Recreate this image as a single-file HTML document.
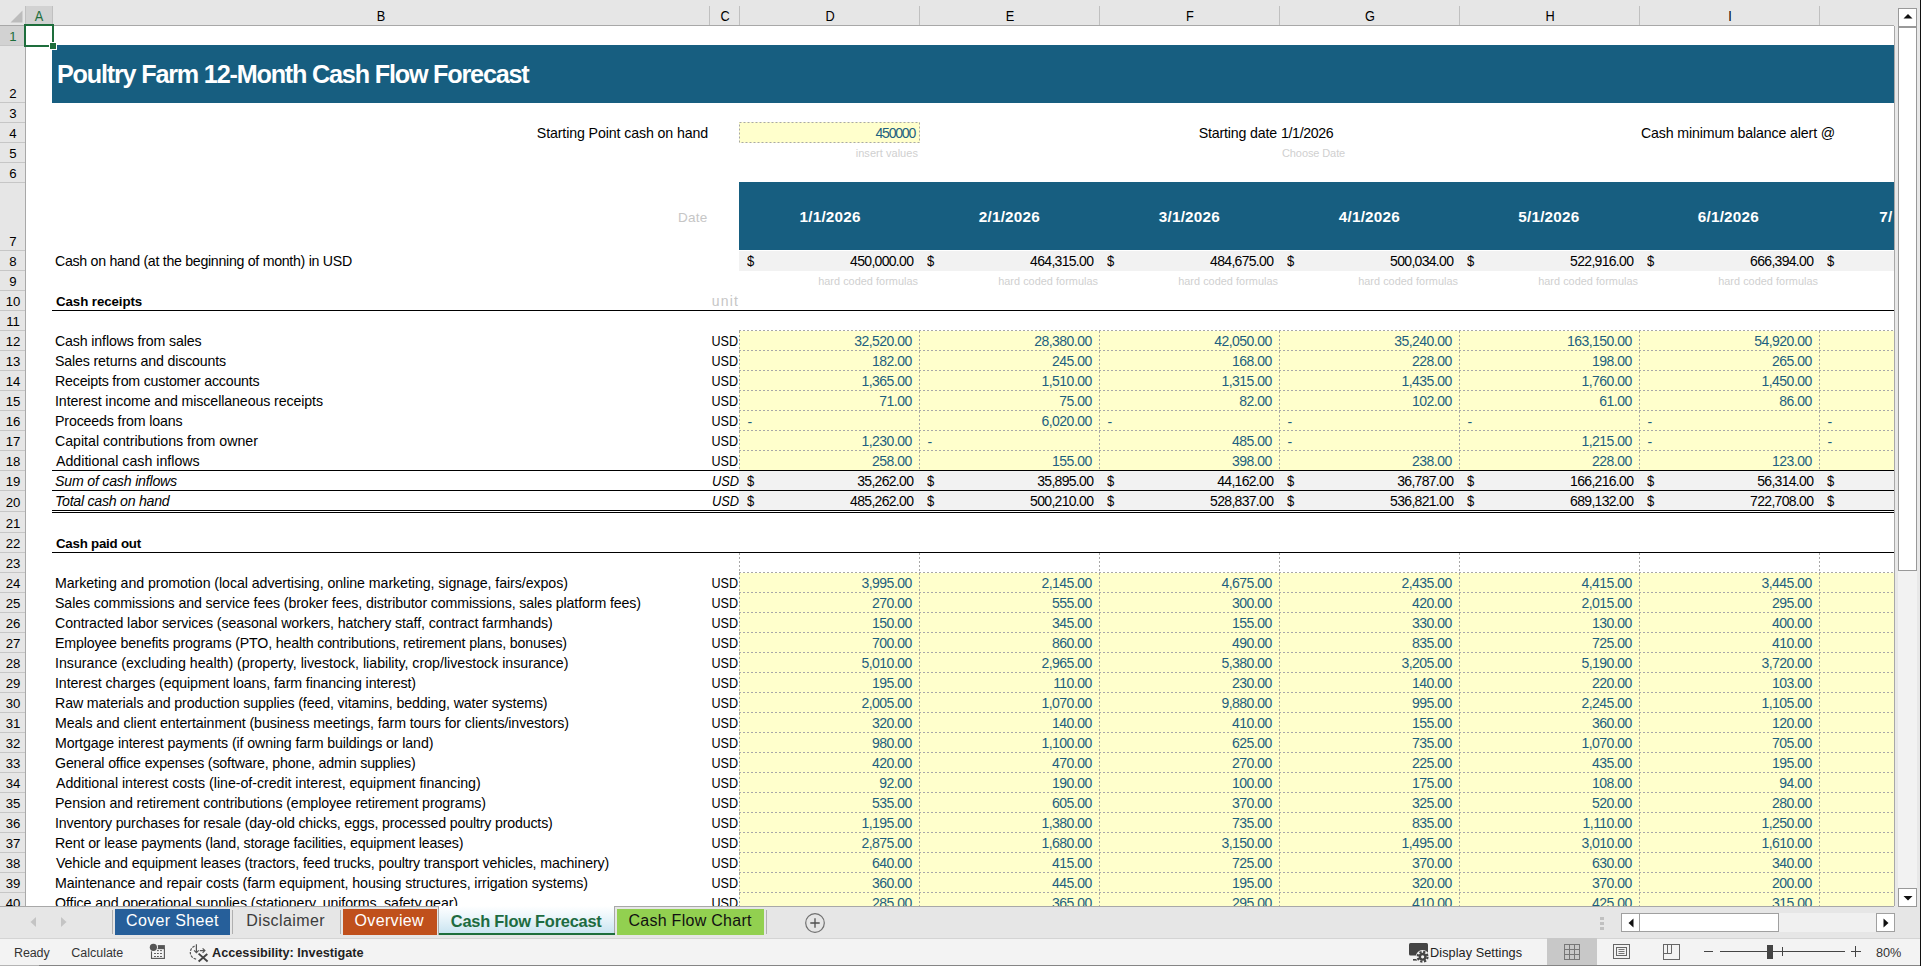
<!DOCTYPE html>
<html><head><meta charset="utf-8">
<style>
html,body{margin:0;padding:0;}
body{width:1921px;height:966px;overflow:hidden;position:relative;background:#fff;font-family:"Liberation Sans", sans-serif;}
body div{position:absolute;}
.t{white-space:nowrap;}
</style></head><body>
<div style="left:26px;top:26px;width:1868px;height:880px;background:#fff"></div>
<div style="left:52px;top:45px;width:1842px;height:58px;background:#175e80"></div>
<div class="t" style="top:61.67px;font-size:25.2px;line-height:25.2px;color:#fff;font-weight:bold;letter-spacing:-1.192px;left:57.00px;">Poultry Farm 12-Month Cash Flow Forecast</div>
<div class="t" style="top:125.98px;font-size:14.2px;line-height:14.2px;color:#000;letter-spacing:-0.115px;left:108.00px;width:600px;text-align:right;">Starting Point cash on hand</div>
<div style="left:739px;top:122px;width:181px;height:21px;background:#ffffcc"></div>
<svg style="position:absolute;left:739px;top:122px" width="181" height="21"><rect x="0.5" y="0.5" width="180" height="20" fill="none" stroke="#a8a8a8" stroke-width="1" stroke-dasharray="2 2"/></svg>
<div class="t" style="top:126.15px;font-size:14px;line-height:14px;color:#1d5f80;letter-spacing:-1.200px;left:315.00px;width:600px;text-align:right;">450000</div>
<div class="t" style="top:147.69px;font-size:11px;line-height:11px;color:#d0d0d0;letter-spacing:0.042px;left:318.00px;width:600px;text-align:right;">insert values</div>
<div class="t" style="top:125.98px;font-size:14.2px;line-height:14.2px;color:#000;letter-spacing:-0.167px;left:677.00px;width:600px;text-align:right;">Starting date</div>
<div class="t" style="top:125.98px;font-size:14.2px;line-height:14.2px;color:#000;letter-spacing:-0.357px;left:1281.00px;">1/1/2026</div>
<div class="t" style="top:147.69px;font-size:11px;line-height:11px;color:#d0d0d0;letter-spacing:-0.100px;left:1282.00px;">Choose Date</div>
<div class="t" style="top:125.98px;font-size:14.2px;line-height:14.2px;color:#000;letter-spacing:-0.148px;left:1641.00px;">Cash minimum balance alert @</div>
<div style="left:739px;top:182px;width:1155px;height:68px;background:#175e80"></div>
<div class="t" style="top:210.57px;font-size:13.5px;line-height:13.5px;color:#c6c6c6;letter-spacing:0.250px;left:107.50px;width:600px;text-align:right;">Date</div>
<div class="t" style="top:209.05px;font-size:15.3px;line-height:15.3px;color:#fff;font-weight:bold;letter-spacing:0.214px;left:799.50px;">1/1/2026</div>
<div class="t" style="top:209.05px;font-size:15.3px;line-height:15.3px;color:#fff;font-weight:bold;letter-spacing:0.214px;left:978.75px;">2/1/2026</div>
<div class="t" style="top:209.05px;font-size:15.3px;line-height:15.3px;color:#fff;font-weight:bold;letter-spacing:0.214px;left:1158.75px;">3/1/2026</div>
<div class="t" style="top:209.05px;font-size:15.3px;line-height:15.3px;color:#fff;font-weight:bold;letter-spacing:0.214px;left:1338.75px;">4/1/2026</div>
<div class="t" style="top:209.05px;font-size:15.3px;line-height:15.3px;color:#fff;font-weight:bold;letter-spacing:0.214px;left:1518.25px;">5/1/2026</div>
<div class="t" style="top:209.05px;font-size:15.3px;line-height:15.3px;color:#fff;font-weight:bold;letter-spacing:0.214px;left:1697.75px;">6/1/2026</div>
<div class="t" style="top:209.05px;font-size:15.3px;line-height:15.3px;color:#fff;font-weight:bold;letter-spacing:0.214px;left:1879.25px;">7/</div>
<div class="t" style="top:253.98px;font-size:14.2px;line-height:14.2px;color:#000;letter-spacing:-0.296px;left:55.00px;">Cash on hand (at the beginning of month) in USD</div>
<div style="left:739px;top:251px;width:1155px;height:20px;background:#f2f2f2"></div>
<div class="t" style="top:252.88px;font-size:15.5px;line-height:15.5px;color:#000;transform:scaleX(0.8438);transform-origin:left center;left:747.00px;">$</div>
<div class="t" style="top:254.15px;font-size:14px;line-height:14px;color:#000;letter-spacing:-0.694px;left:313.25px;width:600px;text-align:right;">450,000.00</div>
<div class="t" style="top:275.77px;font-size:10.9px;line-height:10.9px;color:#d0d0d0;letter-spacing:0.028px;left:318.00px;width:600px;text-align:right;">hard coded formulas</div>
<div class="t" style="top:252.88px;font-size:15.5px;line-height:15.5px;color:#000;transform:scaleX(0.8438);transform-origin:left center;left:927.00px;">$</div>
<div class="t" style="top:254.15px;font-size:14px;line-height:14px;color:#000;letter-spacing:-0.694px;left:493.25px;width:600px;text-align:right;">464,315.00</div>
<div class="t" style="top:275.77px;font-size:10.9px;line-height:10.9px;color:#d0d0d0;letter-spacing:0.028px;left:498.00px;width:600px;text-align:right;">hard coded formulas</div>
<div class="t" style="top:252.88px;font-size:15.5px;line-height:15.5px;color:#000;transform:scaleX(0.8438);transform-origin:left center;left:1107.00px;">$</div>
<div class="t" style="top:254.15px;font-size:14px;line-height:14px;color:#000;letter-spacing:-0.694px;left:673.25px;width:600px;text-align:right;">484,675.00</div>
<div class="t" style="top:275.77px;font-size:10.9px;line-height:10.9px;color:#d0d0d0;letter-spacing:0.028px;left:678.00px;width:600px;text-align:right;">hard coded formulas</div>
<div class="t" style="top:252.88px;font-size:15.5px;line-height:15.5px;color:#000;transform:scaleX(0.8438);transform-origin:left center;left:1287.00px;">$</div>
<div class="t" style="top:254.15px;font-size:14px;line-height:14px;color:#000;letter-spacing:-0.694px;left:853.25px;width:600px;text-align:right;">500,034.00</div>
<div class="t" style="top:275.77px;font-size:10.9px;line-height:10.9px;color:#d0d0d0;letter-spacing:0.028px;left:858.00px;width:600px;text-align:right;">hard coded formulas</div>
<div class="t" style="top:252.88px;font-size:15.5px;line-height:15.5px;color:#000;transform:scaleX(0.8438);transform-origin:left center;left:1467.00px;">$</div>
<div class="t" style="top:254.15px;font-size:14px;line-height:14px;color:#000;letter-spacing:-0.694px;left:1033.25px;width:600px;text-align:right;">522,916.00</div>
<div class="t" style="top:275.77px;font-size:10.9px;line-height:10.9px;color:#d0d0d0;letter-spacing:0.028px;left:1038.00px;width:600px;text-align:right;">hard coded formulas</div>
<div class="t" style="top:252.88px;font-size:15.5px;line-height:15.5px;color:#000;transform:scaleX(0.8438);transform-origin:left center;left:1647.00px;">$</div>
<div class="t" style="top:254.15px;font-size:14px;line-height:14px;color:#000;letter-spacing:-0.694px;left:1213.25px;width:600px;text-align:right;">666,394.00</div>
<div class="t" style="top:275.77px;font-size:10.9px;line-height:10.9px;color:#d0d0d0;letter-spacing:0.028px;left:1218.00px;width:600px;text-align:right;">hard coded formulas</div>
<div class="t" style="top:252.88px;font-size:15.5px;line-height:15.5px;color:#000;transform:scaleX(0.8438);transform-origin:left center;left:1827.00px;">$</div>
<div class="t" style="top:294.74px;font-size:13.3px;line-height:13.3px;color:#000;font-weight:bold;letter-spacing:-0.083px;left:56.00px;">Cash receipts</div>
<div class="t" style="top:294.15px;font-size:14px;line-height:14px;color:#c6c6c6;letter-spacing:1.167px;left:139.00px;width:600px;text-align:right;">unit</div>
<div style="left:52px;top:310px;width:1842px;height:1px;background:#000"></div>
<div style="left:739px;top:331px;width:1155px;height:140px;background:#ffffcc"></div>
<div style="left:739px;top:330px;width:1155px;height:1px;background-image:linear-gradient(90deg,#a8a8a8 50%,transparent 50%);background-size:4px 1px"></div>
<div style="left:739px;top:350px;width:1155px;height:1px;background-image:linear-gradient(90deg,#a8a8a8 50%,transparent 50%);background-size:4px 1px"></div>
<div style="left:739px;top:370px;width:1155px;height:1px;background-image:linear-gradient(90deg,#a8a8a8 50%,transparent 50%);background-size:4px 1px"></div>
<div style="left:739px;top:390px;width:1155px;height:1px;background-image:linear-gradient(90deg,#a8a8a8 50%,transparent 50%);background-size:4px 1px"></div>
<div style="left:739px;top:410px;width:1155px;height:1px;background-image:linear-gradient(90deg,#a8a8a8 50%,transparent 50%);background-size:4px 1px"></div>
<div style="left:739px;top:430px;width:1155px;height:1px;background-image:linear-gradient(90deg,#a8a8a8 50%,transparent 50%);background-size:4px 1px"></div>
<div style="left:739px;top:450px;width:1155px;height:1px;background-image:linear-gradient(90deg,#a8a8a8 50%,transparent 50%);background-size:4px 1px"></div>
<div style="left:739px;top:331px;width:1px;height:139px;background-image:linear-gradient(180deg,#a8a8a8 50%,transparent 50%);background-size:1px 4px"></div>
<div style="left:919px;top:331px;width:1px;height:139px;background-image:linear-gradient(180deg,#a8a8a8 50%,transparent 50%);background-size:1px 4px"></div>
<div style="left:1099px;top:331px;width:1px;height:139px;background-image:linear-gradient(180deg,#a8a8a8 50%,transparent 50%);background-size:1px 4px"></div>
<div style="left:1279px;top:331px;width:1px;height:139px;background-image:linear-gradient(180deg,#a8a8a8 50%,transparent 50%);background-size:1px 4px"></div>
<div style="left:1459px;top:331px;width:1px;height:139px;background-image:linear-gradient(180deg,#a8a8a8 50%,transparent 50%);background-size:1px 4px"></div>
<div style="left:1639px;top:331px;width:1px;height:139px;background-image:linear-gradient(180deg,#a8a8a8 50%,transparent 50%);background-size:1px 4px"></div>
<div style="left:1819px;top:331px;width:1px;height:139px;background-image:linear-gradient(180deg,#a8a8a8 50%,transparent 50%);background-size:1px 4px"></div>
<div class="t" style="top:333.98px;font-size:14.2px;line-height:14.2px;color:#000;letter-spacing:-0.145px;left:55.00px;">Cash inflows from sales</div>
<div class="t" style="top:333.90px;font-size:14.3px;line-height:14.3px;color:#000;transform:scaleX(0.8809);transform-origin:right center;left:138.00px;width:600px;text-align:right;">USD</div>
<div class="t" style="top:334.15px;font-size:14px;line-height:14px;color:#1d5f80;letter-spacing:-0.531px;left:311.75px;width:600px;text-align:right;">32,520.00</div>
<div class="t" style="top:334.15px;font-size:14px;line-height:14px;color:#1d5f80;letter-spacing:-0.531px;left:491.75px;width:600px;text-align:right;">28,380.00</div>
<div class="t" style="top:334.15px;font-size:14px;line-height:14px;color:#1d5f80;letter-spacing:-0.531px;left:671.75px;width:600px;text-align:right;">42,050.00</div>
<div class="t" style="top:334.15px;font-size:14px;line-height:14px;color:#1d5f80;letter-spacing:-0.531px;left:851.75px;width:600px;text-align:right;">35,240.00</div>
<div class="t" style="top:334.15px;font-size:14px;line-height:14px;color:#1d5f80;letter-spacing:-0.531px;left:1031.75px;width:600px;text-align:right;">163,150.00</div>
<div class="t" style="top:334.15px;font-size:14px;line-height:14px;color:#1d5f80;letter-spacing:-0.531px;left:1211.75px;width:600px;text-align:right;">54,920.00</div>
<div class="t" style="top:353.98px;font-size:14.2px;line-height:14.2px;color:#000;letter-spacing:-0.150px;left:55.00px;">Sales returns and discounts</div>
<div class="t" style="top:353.90px;font-size:14.3px;line-height:14.3px;color:#000;transform:scaleX(0.8809);transform-origin:right center;left:138.00px;width:600px;text-align:right;">USD</div>
<div class="t" style="top:354.15px;font-size:14px;line-height:14px;color:#1d5f80;letter-spacing:-0.531px;left:311.75px;width:600px;text-align:right;">182.00</div>
<div class="t" style="top:354.15px;font-size:14px;line-height:14px;color:#1d5f80;letter-spacing:-0.531px;left:491.75px;width:600px;text-align:right;">245.00</div>
<div class="t" style="top:354.15px;font-size:14px;line-height:14px;color:#1d5f80;letter-spacing:-0.531px;left:671.75px;width:600px;text-align:right;">168.00</div>
<div class="t" style="top:354.15px;font-size:14px;line-height:14px;color:#1d5f80;letter-spacing:-0.531px;left:851.75px;width:600px;text-align:right;">228.00</div>
<div class="t" style="top:354.15px;font-size:14px;line-height:14px;color:#1d5f80;letter-spacing:-0.531px;left:1031.75px;width:600px;text-align:right;">198.00</div>
<div class="t" style="top:354.15px;font-size:14px;line-height:14px;color:#1d5f80;letter-spacing:-0.531px;left:1211.75px;width:600px;text-align:right;">265.00</div>
<div class="t" style="top:373.98px;font-size:14.2px;line-height:14.2px;color:#000;letter-spacing:-0.197px;left:55.00px;">Receipts from customer accounts</div>
<div class="t" style="top:373.90px;font-size:14.3px;line-height:14.3px;color:#000;transform:scaleX(0.8809);transform-origin:right center;left:138.00px;width:600px;text-align:right;">USD</div>
<div class="t" style="top:374.15px;font-size:14px;line-height:14px;color:#1d5f80;letter-spacing:-0.531px;left:311.75px;width:600px;text-align:right;">1,365.00</div>
<div class="t" style="top:374.15px;font-size:14px;line-height:14px;color:#1d5f80;letter-spacing:-0.531px;left:491.75px;width:600px;text-align:right;">1,510.00</div>
<div class="t" style="top:374.15px;font-size:14px;line-height:14px;color:#1d5f80;letter-spacing:-0.531px;left:671.75px;width:600px;text-align:right;">1,315.00</div>
<div class="t" style="top:374.15px;font-size:14px;line-height:14px;color:#1d5f80;letter-spacing:-0.531px;left:851.75px;width:600px;text-align:right;">1,435.00</div>
<div class="t" style="top:374.15px;font-size:14px;line-height:14px;color:#1d5f80;letter-spacing:-0.531px;left:1031.75px;width:600px;text-align:right;">1,760.00</div>
<div class="t" style="top:374.15px;font-size:14px;line-height:14px;color:#1d5f80;letter-spacing:-0.531px;left:1211.75px;width:600px;text-align:right;">1,450.00</div>
<div class="t" style="top:393.98px;font-size:14.2px;line-height:14.2px;color:#000;letter-spacing:-0.098px;left:55.00px;">Interest income and miscellaneous receipts</div>
<div class="t" style="top:393.90px;font-size:14.3px;line-height:14.3px;color:#000;transform:scaleX(0.8809);transform-origin:right center;left:138.00px;width:600px;text-align:right;">USD</div>
<div class="t" style="top:394.15px;font-size:14px;line-height:14px;color:#1d5f80;letter-spacing:-0.531px;left:311.75px;width:600px;text-align:right;">71.00</div>
<div class="t" style="top:394.15px;font-size:14px;line-height:14px;color:#1d5f80;letter-spacing:-0.531px;left:491.75px;width:600px;text-align:right;">75.00</div>
<div class="t" style="top:394.15px;font-size:14px;line-height:14px;color:#1d5f80;letter-spacing:-0.531px;left:671.75px;width:600px;text-align:right;">82.00</div>
<div class="t" style="top:394.15px;font-size:14px;line-height:14px;color:#1d5f80;letter-spacing:-0.531px;left:851.75px;width:600px;text-align:right;">102.00</div>
<div class="t" style="top:394.15px;font-size:14px;line-height:14px;color:#1d5f80;letter-spacing:-0.531px;left:1031.75px;width:600px;text-align:right;">61.00</div>
<div class="t" style="top:394.15px;font-size:14px;line-height:14px;color:#1d5f80;letter-spacing:-0.531px;left:1211.75px;width:600px;text-align:right;">86.00</div>
<div class="t" style="top:413.98px;font-size:14.2px;line-height:14.2px;color:#000;letter-spacing:-0.144px;left:55.00px;">Proceeds from loans</div>
<div class="t" style="top:413.90px;font-size:14.3px;line-height:14.3px;color:#000;transform:scaleX(0.8809);transform-origin:right center;left:138.00px;width:600px;text-align:right;">USD</div>
<div class="t" style="top:415.15px;font-size:14px;line-height:14px;color:#1d5f80;left:747.50px;">-</div>
<div class="t" style="top:414.15px;font-size:14px;line-height:14px;color:#1d5f80;letter-spacing:-0.531px;left:491.75px;width:600px;text-align:right;">6,020.00</div>
<div class="t" style="top:415.15px;font-size:14px;line-height:14px;color:#1d5f80;left:1107.50px;">-</div>
<div class="t" style="top:415.15px;font-size:14px;line-height:14px;color:#1d5f80;left:1287.50px;">-</div>
<div class="t" style="top:415.15px;font-size:14px;line-height:14px;color:#1d5f80;left:1467.50px;">-</div>
<div class="t" style="top:415.15px;font-size:14px;line-height:14px;color:#1d5f80;left:1647.50px;">-</div>
<div class="t" style="top:415.15px;font-size:14px;line-height:14px;color:#1d5f80;left:1827.50px;">-</div>
<div class="t" style="top:433.98px;font-size:14.2px;line-height:14.2px;color:#000;letter-spacing:-0.019px;left:55.00px;">Capital contributions from owner</div>
<div class="t" style="top:433.90px;font-size:14.3px;line-height:14.3px;color:#000;transform:scaleX(0.8809);transform-origin:right center;left:138.00px;width:600px;text-align:right;">USD</div>
<div class="t" style="top:434.15px;font-size:14px;line-height:14px;color:#1d5f80;letter-spacing:-0.531px;left:311.75px;width:600px;text-align:right;">1,230.00</div>
<div class="t" style="top:435.15px;font-size:14px;line-height:14px;color:#1d5f80;left:927.50px;">-</div>
<div class="t" style="top:434.15px;font-size:14px;line-height:14px;color:#1d5f80;letter-spacing:-0.531px;left:671.75px;width:600px;text-align:right;">485.00</div>
<div class="t" style="top:435.15px;font-size:14px;line-height:14px;color:#1d5f80;left:1287.50px;">-</div>
<div class="t" style="top:434.15px;font-size:14px;line-height:14px;color:#1d5f80;letter-spacing:-0.531px;left:1031.75px;width:600px;text-align:right;">1,215.00</div>
<div class="t" style="top:435.15px;font-size:14px;line-height:14px;color:#1d5f80;left:1647.50px;">-</div>
<div class="t" style="top:435.15px;font-size:14px;line-height:14px;color:#1d5f80;left:1827.50px;">-</div>
<div class="t" style="top:453.98px;font-size:14.2px;line-height:14.2px;color:#000;letter-spacing:0.005px;left:56.00px;">Additional cash inflows</div>
<div class="t" style="top:453.90px;font-size:14.3px;line-height:14.3px;color:#000;transform:scaleX(0.8809);transform-origin:right center;left:138.00px;width:600px;text-align:right;">USD</div>
<div class="t" style="top:454.15px;font-size:14px;line-height:14px;color:#1d5f80;letter-spacing:-0.531px;left:311.75px;width:600px;text-align:right;">258.00</div>
<div class="t" style="top:454.15px;font-size:14px;line-height:14px;color:#1d5f80;letter-spacing:-0.531px;left:491.75px;width:600px;text-align:right;">155.00</div>
<div class="t" style="top:454.15px;font-size:14px;line-height:14px;color:#1d5f80;letter-spacing:-0.531px;left:671.75px;width:600px;text-align:right;">398.00</div>
<div class="t" style="top:454.15px;font-size:14px;line-height:14px;color:#1d5f80;letter-spacing:-0.531px;left:851.75px;width:600px;text-align:right;">238.00</div>
<div class="t" style="top:454.15px;font-size:14px;line-height:14px;color:#1d5f80;letter-spacing:-0.531px;left:1031.75px;width:600px;text-align:right;">228.00</div>
<div class="t" style="top:454.15px;font-size:14px;line-height:14px;color:#1d5f80;letter-spacing:-0.531px;left:1211.75px;width:600px;text-align:right;">123.00</div>
<div style="left:739px;top:471px;width:1155px;height:19px;background:#f2f2f2"></div>
<div style="left:739px;top:491px;width:1155px;height:19px;background:#f2f2f2"></div>
<div style="left:52px;top:470px;width:1842px;height:1px;background:#000"></div>
<div style="left:52px;top:490px;width:1842px;height:1px;background:#000"></div>
<div style="left:52px;top:510px;width:1842px;height:1px;background:#000"></div>
<div style="left:52px;top:512px;width:1842px;height:1px;background:#000"></div>
<div class="t" style="top:473.98px;font-size:14.2px;line-height:14.2px;color:#000;font-style:italic;letter-spacing:-0.222px;left:55.00px;">Sum of cash inflows</div>
<div class="t" style="top:493.98px;font-size:14.2px;line-height:14.2px;color:#000;font-style:italic;letter-spacing:-0.276px;left:55.00px;">Total cash on hand</div>
<div class="t" style="top:473.90px;font-size:14.3px;line-height:14.3px;color:#000;font-style:italic;transform:scaleX(0.8980);transform-origin:right center;left:138.50px;width:600px;text-align:right;">USD</div>
<div class="t" style="top:493.90px;font-size:14.3px;line-height:14.3px;color:#000;font-style:italic;transform:scaleX(0.8980);transform-origin:right center;left:138.50px;width:600px;text-align:right;">USD</div>
<div class="t" style="top:472.88px;font-size:15.5px;line-height:15.5px;color:#000;transform:scaleX(0.8438);transform-origin:left center;left:747.00px;">$</div>
<div class="t" style="top:492.88px;font-size:15.5px;line-height:15.5px;color:#000;transform:scaleX(0.8438);transform-origin:left center;left:747.00px;">$</div>
<div class="t" style="top:474.15px;font-size:14px;line-height:14px;color:#000;letter-spacing:-0.694px;left:313.25px;width:600px;text-align:right;">35,262.00</div>
<div class="t" style="top:494.15px;font-size:14px;line-height:14px;color:#000;letter-spacing:-0.694px;left:313.25px;width:600px;text-align:right;">485,262.00</div>
<div class="t" style="top:472.88px;font-size:15.5px;line-height:15.5px;color:#000;transform:scaleX(0.8438);transform-origin:left center;left:927.00px;">$</div>
<div class="t" style="top:492.88px;font-size:15.5px;line-height:15.5px;color:#000;transform:scaleX(0.8438);transform-origin:left center;left:927.00px;">$</div>
<div class="t" style="top:474.15px;font-size:14px;line-height:14px;color:#000;letter-spacing:-0.694px;left:493.25px;width:600px;text-align:right;">35,895.00</div>
<div class="t" style="top:494.15px;font-size:14px;line-height:14px;color:#000;letter-spacing:-0.694px;left:493.25px;width:600px;text-align:right;">500,210.00</div>
<div class="t" style="top:472.88px;font-size:15.5px;line-height:15.5px;color:#000;transform:scaleX(0.8438);transform-origin:left center;left:1107.00px;">$</div>
<div class="t" style="top:492.88px;font-size:15.5px;line-height:15.5px;color:#000;transform:scaleX(0.8438);transform-origin:left center;left:1107.00px;">$</div>
<div class="t" style="top:474.15px;font-size:14px;line-height:14px;color:#000;letter-spacing:-0.694px;left:673.25px;width:600px;text-align:right;">44,162.00</div>
<div class="t" style="top:494.15px;font-size:14px;line-height:14px;color:#000;letter-spacing:-0.694px;left:673.25px;width:600px;text-align:right;">528,837.00</div>
<div class="t" style="top:472.88px;font-size:15.5px;line-height:15.5px;color:#000;transform:scaleX(0.8438);transform-origin:left center;left:1287.00px;">$</div>
<div class="t" style="top:492.88px;font-size:15.5px;line-height:15.5px;color:#000;transform:scaleX(0.8438);transform-origin:left center;left:1287.00px;">$</div>
<div class="t" style="top:474.15px;font-size:14px;line-height:14px;color:#000;letter-spacing:-0.694px;left:853.25px;width:600px;text-align:right;">36,787.00</div>
<div class="t" style="top:494.15px;font-size:14px;line-height:14px;color:#000;letter-spacing:-0.694px;left:853.25px;width:600px;text-align:right;">536,821.00</div>
<div class="t" style="top:472.88px;font-size:15.5px;line-height:15.5px;color:#000;transform:scaleX(0.8438);transform-origin:left center;left:1467.00px;">$</div>
<div class="t" style="top:492.88px;font-size:15.5px;line-height:15.5px;color:#000;transform:scaleX(0.8438);transform-origin:left center;left:1467.00px;">$</div>
<div class="t" style="top:474.15px;font-size:14px;line-height:14px;color:#000;letter-spacing:-0.694px;left:1033.25px;width:600px;text-align:right;">166,216.00</div>
<div class="t" style="top:494.15px;font-size:14px;line-height:14px;color:#000;letter-spacing:-0.694px;left:1033.25px;width:600px;text-align:right;">689,132.00</div>
<div class="t" style="top:472.88px;font-size:15.5px;line-height:15.5px;color:#000;transform:scaleX(0.8438);transform-origin:left center;left:1647.00px;">$</div>
<div class="t" style="top:492.88px;font-size:15.5px;line-height:15.5px;color:#000;transform:scaleX(0.8438);transform-origin:left center;left:1647.00px;">$</div>
<div class="t" style="top:474.15px;font-size:14px;line-height:14px;color:#000;letter-spacing:-0.694px;left:1213.25px;width:600px;text-align:right;">56,314.00</div>
<div class="t" style="top:494.15px;font-size:14px;line-height:14px;color:#000;letter-spacing:-0.694px;left:1213.25px;width:600px;text-align:right;">722,708.00</div>
<div class="t" style="top:472.88px;font-size:15.5px;line-height:15.5px;color:#000;transform:scaleX(0.8438);transform-origin:left center;left:1827.00px;">$</div>
<div class="t" style="top:492.88px;font-size:15.5px;line-height:15.5px;color:#000;transform:scaleX(0.8438);transform-origin:left center;left:1827.00px;">$</div>
<div class="t" style="top:536.74px;font-size:13.3px;line-height:13.3px;color:#000;font-weight:bold;letter-spacing:-0.233px;left:56.00px;">Cash paid out</div>
<div style="left:52px;top:552px;width:1842px;height:1px;background:#000"></div>
<div style="left:739px;top:573px;width:1155px;height:333px;background:#ffffcc"></div>
<div style="left:739px;top:572px;width:1155px;height:1px;background-image:linear-gradient(90deg,#a8a8a8 50%,transparent 50%);background-size:4px 1px"></div>
<div style="left:739px;top:592px;width:1155px;height:1px;background-image:linear-gradient(90deg,#a8a8a8 50%,transparent 50%);background-size:4px 1px"></div>
<div style="left:739px;top:612px;width:1155px;height:1px;background-image:linear-gradient(90deg,#a8a8a8 50%,transparent 50%);background-size:4px 1px"></div>
<div style="left:739px;top:632px;width:1155px;height:1px;background-image:linear-gradient(90deg,#a8a8a8 50%,transparent 50%);background-size:4px 1px"></div>
<div style="left:739px;top:652px;width:1155px;height:1px;background-image:linear-gradient(90deg,#a8a8a8 50%,transparent 50%);background-size:4px 1px"></div>
<div style="left:739px;top:672px;width:1155px;height:1px;background-image:linear-gradient(90deg,#a8a8a8 50%,transparent 50%);background-size:4px 1px"></div>
<div style="left:739px;top:692px;width:1155px;height:1px;background-image:linear-gradient(90deg,#a8a8a8 50%,transparent 50%);background-size:4px 1px"></div>
<div style="left:739px;top:712px;width:1155px;height:1px;background-image:linear-gradient(90deg,#a8a8a8 50%,transparent 50%);background-size:4px 1px"></div>
<div style="left:739px;top:732px;width:1155px;height:1px;background-image:linear-gradient(90deg,#a8a8a8 50%,transparent 50%);background-size:4px 1px"></div>
<div style="left:739px;top:752px;width:1155px;height:1px;background-image:linear-gradient(90deg,#a8a8a8 50%,transparent 50%);background-size:4px 1px"></div>
<div style="left:739px;top:772px;width:1155px;height:1px;background-image:linear-gradient(90deg,#a8a8a8 50%,transparent 50%);background-size:4px 1px"></div>
<div style="left:739px;top:792px;width:1155px;height:1px;background-image:linear-gradient(90deg,#a8a8a8 50%,transparent 50%);background-size:4px 1px"></div>
<div style="left:739px;top:812px;width:1155px;height:1px;background-image:linear-gradient(90deg,#a8a8a8 50%,transparent 50%);background-size:4px 1px"></div>
<div style="left:739px;top:832px;width:1155px;height:1px;background-image:linear-gradient(90deg,#a8a8a8 50%,transparent 50%);background-size:4px 1px"></div>
<div style="left:739px;top:852px;width:1155px;height:1px;background-image:linear-gradient(90deg,#a8a8a8 50%,transparent 50%);background-size:4px 1px"></div>
<div style="left:739px;top:872px;width:1155px;height:1px;background-image:linear-gradient(90deg,#a8a8a8 50%,transparent 50%);background-size:4px 1px"></div>
<div style="left:739px;top:892px;width:1155px;height:1px;background-image:linear-gradient(90deg,#a8a8a8 50%,transparent 50%);background-size:4px 1px"></div>
<div style="left:739px;top:912px;width:1155px;height:1px;background-image:linear-gradient(90deg,#a8a8a8 50%,transparent 50%);background-size:4px 1px"></div>
<div style="left:739px;top:553px;width:1px;height:353px;background-image:linear-gradient(180deg,#a8a8a8 50%,transparent 50%);background-size:1px 4px"></div>
<div style="left:919px;top:553px;width:1px;height:353px;background-image:linear-gradient(180deg,#a8a8a8 50%,transparent 50%);background-size:1px 4px"></div>
<div style="left:1099px;top:553px;width:1px;height:353px;background-image:linear-gradient(180deg,#a8a8a8 50%,transparent 50%);background-size:1px 4px"></div>
<div style="left:1279px;top:553px;width:1px;height:353px;background-image:linear-gradient(180deg,#a8a8a8 50%,transparent 50%);background-size:1px 4px"></div>
<div style="left:1459px;top:553px;width:1px;height:353px;background-image:linear-gradient(180deg,#a8a8a8 50%,transparent 50%);background-size:1px 4px"></div>
<div style="left:1639px;top:553px;width:1px;height:353px;background-image:linear-gradient(180deg,#a8a8a8 50%,transparent 50%);background-size:1px 4px"></div>
<div style="left:1819px;top:553px;width:1px;height:353px;background-image:linear-gradient(180deg,#a8a8a8 50%,transparent 50%);background-size:1px 4px"></div>
<div class="t" style="top:575.98px;font-size:14.2px;line-height:14.2px;color:#000;letter-spacing:-0.063px;left:55.00px;">Marketing and promotion (local advertising, online marketing, signage, fairs/expos)</div>
<div class="t" style="top:575.90px;font-size:14.3px;line-height:14.3px;color:#000;transform:scaleX(0.8809);transform-origin:right center;left:138.00px;width:600px;text-align:right;">USD</div>
<div class="t" style="top:576.15px;font-size:14px;line-height:14px;color:#1d5f80;letter-spacing:-0.531px;left:311.75px;width:600px;text-align:right;">3,995.00</div>
<div class="t" style="top:576.15px;font-size:14px;line-height:14px;color:#1d5f80;letter-spacing:-0.531px;left:491.75px;width:600px;text-align:right;">2,145.00</div>
<div class="t" style="top:576.15px;font-size:14px;line-height:14px;color:#1d5f80;letter-spacing:-0.531px;left:671.75px;width:600px;text-align:right;">4,675.00</div>
<div class="t" style="top:576.15px;font-size:14px;line-height:14px;color:#1d5f80;letter-spacing:-0.531px;left:851.75px;width:600px;text-align:right;">2,435.00</div>
<div class="t" style="top:576.15px;font-size:14px;line-height:14px;color:#1d5f80;letter-spacing:-0.531px;left:1031.75px;width:600px;text-align:right;">4,415.00</div>
<div class="t" style="top:576.15px;font-size:14px;line-height:14px;color:#1d5f80;letter-spacing:-0.531px;left:1211.75px;width:600px;text-align:right;">3,445.00</div>
<div class="t" style="top:595.98px;font-size:14.2px;line-height:14.2px;color:#000;letter-spacing:-0.108px;left:55.00px;">Sales commissions and service fees (broker fees, distributor commissions, sales platform fees)</div>
<div class="t" style="top:595.90px;font-size:14.3px;line-height:14.3px;color:#000;transform:scaleX(0.8809);transform-origin:right center;left:138.00px;width:600px;text-align:right;">USD</div>
<div class="t" style="top:596.15px;font-size:14px;line-height:14px;color:#1d5f80;letter-spacing:-0.531px;left:311.75px;width:600px;text-align:right;">270.00</div>
<div class="t" style="top:596.15px;font-size:14px;line-height:14px;color:#1d5f80;letter-spacing:-0.531px;left:491.75px;width:600px;text-align:right;">555.00</div>
<div class="t" style="top:596.15px;font-size:14px;line-height:14px;color:#1d5f80;letter-spacing:-0.531px;left:671.75px;width:600px;text-align:right;">300.00</div>
<div class="t" style="top:596.15px;font-size:14px;line-height:14px;color:#1d5f80;letter-spacing:-0.531px;left:851.75px;width:600px;text-align:right;">420.00</div>
<div class="t" style="top:596.15px;font-size:14px;line-height:14px;color:#1d5f80;letter-spacing:-0.531px;left:1031.75px;width:600px;text-align:right;">2,015.00</div>
<div class="t" style="top:596.15px;font-size:14px;line-height:14px;color:#1d5f80;letter-spacing:-0.531px;left:1211.75px;width:600px;text-align:right;">295.00</div>
<div class="t" style="top:615.98px;font-size:14.2px;line-height:14.2px;color:#000;letter-spacing:-0.114px;left:55.00px;">Contracted labor services (seasonal workers, hatchery staff, contract farmhands)</div>
<div class="t" style="top:615.90px;font-size:14.3px;line-height:14.3px;color:#000;transform:scaleX(0.8809);transform-origin:right center;left:138.00px;width:600px;text-align:right;">USD</div>
<div class="t" style="top:616.15px;font-size:14px;line-height:14px;color:#1d5f80;letter-spacing:-0.531px;left:311.75px;width:600px;text-align:right;">150.00</div>
<div class="t" style="top:616.15px;font-size:14px;line-height:14px;color:#1d5f80;letter-spacing:-0.531px;left:491.75px;width:600px;text-align:right;">345.00</div>
<div class="t" style="top:616.15px;font-size:14px;line-height:14px;color:#1d5f80;letter-spacing:-0.531px;left:671.75px;width:600px;text-align:right;">155.00</div>
<div class="t" style="top:616.15px;font-size:14px;line-height:14px;color:#1d5f80;letter-spacing:-0.531px;left:851.75px;width:600px;text-align:right;">330.00</div>
<div class="t" style="top:616.15px;font-size:14px;line-height:14px;color:#1d5f80;letter-spacing:-0.531px;left:1031.75px;width:600px;text-align:right;">130.00</div>
<div class="t" style="top:616.15px;font-size:14px;line-height:14px;color:#1d5f80;letter-spacing:-0.531px;left:1211.75px;width:600px;text-align:right;">400.00</div>
<div class="t" style="top:635.98px;font-size:14.2px;line-height:14.2px;color:#000;letter-spacing:-0.161px;left:55.00px;">Employee benefits programs (PTO, health contributions, retirement plans, bonuses)</div>
<div class="t" style="top:635.90px;font-size:14.3px;line-height:14.3px;color:#000;transform:scaleX(0.8809);transform-origin:right center;left:138.00px;width:600px;text-align:right;">USD</div>
<div class="t" style="top:636.15px;font-size:14px;line-height:14px;color:#1d5f80;letter-spacing:-0.531px;left:311.75px;width:600px;text-align:right;">700.00</div>
<div class="t" style="top:636.15px;font-size:14px;line-height:14px;color:#1d5f80;letter-spacing:-0.531px;left:491.75px;width:600px;text-align:right;">860.00</div>
<div class="t" style="top:636.15px;font-size:14px;line-height:14px;color:#1d5f80;letter-spacing:-0.531px;left:671.75px;width:600px;text-align:right;">490.00</div>
<div class="t" style="top:636.15px;font-size:14px;line-height:14px;color:#1d5f80;letter-spacing:-0.531px;left:851.75px;width:600px;text-align:right;">835.00</div>
<div class="t" style="top:636.15px;font-size:14px;line-height:14px;color:#1d5f80;letter-spacing:-0.531px;left:1031.75px;width:600px;text-align:right;">725.00</div>
<div class="t" style="top:636.15px;font-size:14px;line-height:14px;color:#1d5f80;letter-spacing:-0.531px;left:1211.75px;width:600px;text-align:right;">410.00</div>
<div class="t" style="top:655.98px;font-size:14.2px;line-height:14.2px;color:#000;letter-spacing:-0.002px;left:55.00px;">Insurance (excluding health) (property, livestock, liability, crop/livestock insurance)</div>
<div class="t" style="top:655.90px;font-size:14.3px;line-height:14.3px;color:#000;transform:scaleX(0.8809);transform-origin:right center;left:138.00px;width:600px;text-align:right;">USD</div>
<div class="t" style="top:656.15px;font-size:14px;line-height:14px;color:#1d5f80;letter-spacing:-0.531px;left:311.75px;width:600px;text-align:right;">5,010.00</div>
<div class="t" style="top:656.15px;font-size:14px;line-height:14px;color:#1d5f80;letter-spacing:-0.531px;left:491.75px;width:600px;text-align:right;">2,965.00</div>
<div class="t" style="top:656.15px;font-size:14px;line-height:14px;color:#1d5f80;letter-spacing:-0.531px;left:671.75px;width:600px;text-align:right;">5,380.00</div>
<div class="t" style="top:656.15px;font-size:14px;line-height:14px;color:#1d5f80;letter-spacing:-0.531px;left:851.75px;width:600px;text-align:right;">3,205.00</div>
<div class="t" style="top:656.15px;font-size:14px;line-height:14px;color:#1d5f80;letter-spacing:-0.531px;left:1031.75px;width:600px;text-align:right;">5,190.00</div>
<div class="t" style="top:656.15px;font-size:14px;line-height:14px;color:#1d5f80;letter-spacing:-0.531px;left:1211.75px;width:600px;text-align:right;">3,720.00</div>
<div class="t" style="top:675.98px;font-size:14.2px;line-height:14.2px;color:#000;letter-spacing:-0.097px;left:55.00px;">Interest charges (equipment loans, farm financing interest)</div>
<div class="t" style="top:675.90px;font-size:14.3px;line-height:14.3px;color:#000;transform:scaleX(0.8809);transform-origin:right center;left:138.00px;width:600px;text-align:right;">USD</div>
<div class="t" style="top:676.15px;font-size:14px;line-height:14px;color:#1d5f80;letter-spacing:-0.531px;left:311.75px;width:600px;text-align:right;">195.00</div>
<div class="t" style="top:676.15px;font-size:14px;line-height:14px;color:#1d5f80;letter-spacing:-0.531px;left:491.75px;width:600px;text-align:right;">110.00</div>
<div class="t" style="top:676.15px;font-size:14px;line-height:14px;color:#1d5f80;letter-spacing:-0.531px;left:671.75px;width:600px;text-align:right;">230.00</div>
<div class="t" style="top:676.15px;font-size:14px;line-height:14px;color:#1d5f80;letter-spacing:-0.531px;left:851.75px;width:600px;text-align:right;">140.00</div>
<div class="t" style="top:676.15px;font-size:14px;line-height:14px;color:#1d5f80;letter-spacing:-0.531px;left:1031.75px;width:600px;text-align:right;">220.00</div>
<div class="t" style="top:676.15px;font-size:14px;line-height:14px;color:#1d5f80;letter-spacing:-0.531px;left:1211.75px;width:600px;text-align:right;">103.00</div>
<div class="t" style="top:695.98px;font-size:14.2px;line-height:14.2px;color:#000;letter-spacing:-0.116px;left:55.00px;">Raw materials and production supplies (feed, vitamins, bedding, water systems)</div>
<div class="t" style="top:695.90px;font-size:14.3px;line-height:14.3px;color:#000;transform:scaleX(0.8809);transform-origin:right center;left:138.00px;width:600px;text-align:right;">USD</div>
<div class="t" style="top:696.15px;font-size:14px;line-height:14px;color:#1d5f80;letter-spacing:-0.531px;left:311.75px;width:600px;text-align:right;">2,005.00</div>
<div class="t" style="top:696.15px;font-size:14px;line-height:14px;color:#1d5f80;letter-spacing:-0.531px;left:491.75px;width:600px;text-align:right;">1,070.00</div>
<div class="t" style="top:696.15px;font-size:14px;line-height:14px;color:#1d5f80;letter-spacing:-0.531px;left:671.75px;width:600px;text-align:right;">9,880.00</div>
<div class="t" style="top:696.15px;font-size:14px;line-height:14px;color:#1d5f80;letter-spacing:-0.531px;left:851.75px;width:600px;text-align:right;">995.00</div>
<div class="t" style="top:696.15px;font-size:14px;line-height:14px;color:#1d5f80;letter-spacing:-0.531px;left:1031.75px;width:600px;text-align:right;">2,245.00</div>
<div class="t" style="top:696.15px;font-size:14px;line-height:14px;color:#1d5f80;letter-spacing:-0.531px;left:1211.75px;width:600px;text-align:right;">1,105.00</div>
<div class="t" style="top:715.98px;font-size:14.2px;line-height:14.2px;color:#000;letter-spacing:-0.087px;left:55.00px;">Meals and client entertainment (business meetings, farm tours for clients/investors)</div>
<div class="t" style="top:715.90px;font-size:14.3px;line-height:14.3px;color:#000;transform:scaleX(0.8809);transform-origin:right center;left:138.00px;width:600px;text-align:right;">USD</div>
<div class="t" style="top:716.15px;font-size:14px;line-height:14px;color:#1d5f80;letter-spacing:-0.531px;left:311.75px;width:600px;text-align:right;">320.00</div>
<div class="t" style="top:716.15px;font-size:14px;line-height:14px;color:#1d5f80;letter-spacing:-0.531px;left:491.75px;width:600px;text-align:right;">140.00</div>
<div class="t" style="top:716.15px;font-size:14px;line-height:14px;color:#1d5f80;letter-spacing:-0.531px;left:671.75px;width:600px;text-align:right;">410.00</div>
<div class="t" style="top:716.15px;font-size:14px;line-height:14px;color:#1d5f80;letter-spacing:-0.531px;left:851.75px;width:600px;text-align:right;">155.00</div>
<div class="t" style="top:716.15px;font-size:14px;line-height:14px;color:#1d5f80;letter-spacing:-0.531px;left:1031.75px;width:600px;text-align:right;">360.00</div>
<div class="t" style="top:716.15px;font-size:14px;line-height:14px;color:#1d5f80;letter-spacing:-0.531px;left:1211.75px;width:600px;text-align:right;">120.00</div>
<div class="t" style="top:735.98px;font-size:14.2px;line-height:14.2px;color:#000;letter-spacing:-0.107px;left:55.00px;">Mortgage interest payments (if owning farm buildings or land)</div>
<div class="t" style="top:735.90px;font-size:14.3px;line-height:14.3px;color:#000;transform:scaleX(0.8809);transform-origin:right center;left:138.00px;width:600px;text-align:right;">USD</div>
<div class="t" style="top:736.15px;font-size:14px;line-height:14px;color:#1d5f80;letter-spacing:-0.531px;left:311.75px;width:600px;text-align:right;">980.00</div>
<div class="t" style="top:736.15px;font-size:14px;line-height:14px;color:#1d5f80;letter-spacing:-0.531px;left:491.75px;width:600px;text-align:right;">1,100.00</div>
<div class="t" style="top:736.15px;font-size:14px;line-height:14px;color:#1d5f80;letter-spacing:-0.531px;left:671.75px;width:600px;text-align:right;">625.00</div>
<div class="t" style="top:736.15px;font-size:14px;line-height:14px;color:#1d5f80;letter-spacing:-0.531px;left:851.75px;width:600px;text-align:right;">735.00</div>
<div class="t" style="top:736.15px;font-size:14px;line-height:14px;color:#1d5f80;letter-spacing:-0.531px;left:1031.75px;width:600px;text-align:right;">1,070.00</div>
<div class="t" style="top:736.15px;font-size:14px;line-height:14px;color:#1d5f80;letter-spacing:-0.531px;left:1211.75px;width:600px;text-align:right;">705.00</div>
<div class="t" style="top:755.98px;font-size:14.2px;line-height:14.2px;color:#000;letter-spacing:-0.159px;left:55.00px;">General office expenses (software, phone, admin supplies)</div>
<div class="t" style="top:755.90px;font-size:14.3px;line-height:14.3px;color:#000;transform:scaleX(0.8809);transform-origin:right center;left:138.00px;width:600px;text-align:right;">USD</div>
<div class="t" style="top:756.15px;font-size:14px;line-height:14px;color:#1d5f80;letter-spacing:-0.531px;left:311.75px;width:600px;text-align:right;">420.00</div>
<div class="t" style="top:756.15px;font-size:14px;line-height:14px;color:#1d5f80;letter-spacing:-0.531px;left:491.75px;width:600px;text-align:right;">470.00</div>
<div class="t" style="top:756.15px;font-size:14px;line-height:14px;color:#1d5f80;letter-spacing:-0.531px;left:671.75px;width:600px;text-align:right;">270.00</div>
<div class="t" style="top:756.15px;font-size:14px;line-height:14px;color:#1d5f80;letter-spacing:-0.531px;left:851.75px;width:600px;text-align:right;">225.00</div>
<div class="t" style="top:756.15px;font-size:14px;line-height:14px;color:#1d5f80;letter-spacing:-0.531px;left:1031.75px;width:600px;text-align:right;">435.00</div>
<div class="t" style="top:756.15px;font-size:14px;line-height:14px;color:#1d5f80;letter-spacing:-0.531px;left:1211.75px;width:600px;text-align:right;">195.00</div>
<div class="t" style="top:775.98px;font-size:14.2px;line-height:14.2px;color:#000;letter-spacing:-0.027px;left:56.00px;">Additional interest costs (line-of-credit interest, equipment financing)</div>
<div class="t" style="top:775.90px;font-size:14.3px;line-height:14.3px;color:#000;transform:scaleX(0.8809);transform-origin:right center;left:138.00px;width:600px;text-align:right;">USD</div>
<div class="t" style="top:776.15px;font-size:14px;line-height:14px;color:#1d5f80;letter-spacing:-0.531px;left:311.75px;width:600px;text-align:right;">92.00</div>
<div class="t" style="top:776.15px;font-size:14px;line-height:14px;color:#1d5f80;letter-spacing:-0.531px;left:491.75px;width:600px;text-align:right;">190.00</div>
<div class="t" style="top:776.15px;font-size:14px;line-height:14px;color:#1d5f80;letter-spacing:-0.531px;left:671.75px;width:600px;text-align:right;">100.00</div>
<div class="t" style="top:776.15px;font-size:14px;line-height:14px;color:#1d5f80;letter-spacing:-0.531px;left:851.75px;width:600px;text-align:right;">175.00</div>
<div class="t" style="top:776.15px;font-size:14px;line-height:14px;color:#1d5f80;letter-spacing:-0.531px;left:1031.75px;width:600px;text-align:right;">108.00</div>
<div class="t" style="top:776.15px;font-size:14px;line-height:14px;color:#1d5f80;letter-spacing:-0.531px;left:1211.75px;width:600px;text-align:right;">94.00</div>
<div class="t" style="top:795.98px;font-size:14.2px;line-height:14.2px;color:#000;letter-spacing:-0.102px;left:55.00px;">Pension and retirement contributions (employee retirement programs)</div>
<div class="t" style="top:795.90px;font-size:14.3px;line-height:14.3px;color:#000;transform:scaleX(0.8809);transform-origin:right center;left:138.00px;width:600px;text-align:right;">USD</div>
<div class="t" style="top:796.15px;font-size:14px;line-height:14px;color:#1d5f80;letter-spacing:-0.531px;left:311.75px;width:600px;text-align:right;">535.00</div>
<div class="t" style="top:796.15px;font-size:14px;line-height:14px;color:#1d5f80;letter-spacing:-0.531px;left:491.75px;width:600px;text-align:right;">605.00</div>
<div class="t" style="top:796.15px;font-size:14px;line-height:14px;color:#1d5f80;letter-spacing:-0.531px;left:671.75px;width:600px;text-align:right;">370.00</div>
<div class="t" style="top:796.15px;font-size:14px;line-height:14px;color:#1d5f80;letter-spacing:-0.531px;left:851.75px;width:600px;text-align:right;">325.00</div>
<div class="t" style="top:796.15px;font-size:14px;line-height:14px;color:#1d5f80;letter-spacing:-0.531px;left:1031.75px;width:600px;text-align:right;">520.00</div>
<div class="t" style="top:796.15px;font-size:14px;line-height:14px;color:#1d5f80;letter-spacing:-0.531px;left:1211.75px;width:600px;text-align:right;">280.00</div>
<div class="t" style="top:815.98px;font-size:14.2px;line-height:14.2px;color:#000;letter-spacing:-0.165px;left:55.00px;">Inventory purchases for resale (day-old chicks, eggs, processed poultry products)</div>
<div class="t" style="top:815.90px;font-size:14.3px;line-height:14.3px;color:#000;transform:scaleX(0.8809);transform-origin:right center;left:138.00px;width:600px;text-align:right;">USD</div>
<div class="t" style="top:816.15px;font-size:14px;line-height:14px;color:#1d5f80;letter-spacing:-0.531px;left:311.75px;width:600px;text-align:right;">1,195.00</div>
<div class="t" style="top:816.15px;font-size:14px;line-height:14px;color:#1d5f80;letter-spacing:-0.531px;left:491.75px;width:600px;text-align:right;">1,380.00</div>
<div class="t" style="top:816.15px;font-size:14px;line-height:14px;color:#1d5f80;letter-spacing:-0.531px;left:671.75px;width:600px;text-align:right;">735.00</div>
<div class="t" style="top:816.15px;font-size:14px;line-height:14px;color:#1d5f80;letter-spacing:-0.531px;left:851.75px;width:600px;text-align:right;">835.00</div>
<div class="t" style="top:816.15px;font-size:14px;line-height:14px;color:#1d5f80;letter-spacing:-0.531px;left:1031.75px;width:600px;text-align:right;">1,110.00</div>
<div class="t" style="top:816.15px;font-size:14px;line-height:14px;color:#1d5f80;letter-spacing:-0.531px;left:1211.75px;width:600px;text-align:right;">1,250.00</div>
<div class="t" style="top:835.98px;font-size:14.2px;line-height:14.2px;color:#000;letter-spacing:-0.155px;left:55.00px;">Rent or lease payments (land, storage facilities, equipment leases)</div>
<div class="t" style="top:835.90px;font-size:14.3px;line-height:14.3px;color:#000;transform:scaleX(0.8809);transform-origin:right center;left:138.00px;width:600px;text-align:right;">USD</div>
<div class="t" style="top:836.15px;font-size:14px;line-height:14px;color:#1d5f80;letter-spacing:-0.531px;left:311.75px;width:600px;text-align:right;">2,875.00</div>
<div class="t" style="top:836.15px;font-size:14px;line-height:14px;color:#1d5f80;letter-spacing:-0.531px;left:491.75px;width:600px;text-align:right;">1,680.00</div>
<div class="t" style="top:836.15px;font-size:14px;line-height:14px;color:#1d5f80;letter-spacing:-0.531px;left:671.75px;width:600px;text-align:right;">3,150.00</div>
<div class="t" style="top:836.15px;font-size:14px;line-height:14px;color:#1d5f80;letter-spacing:-0.531px;left:851.75px;width:600px;text-align:right;">1,495.00</div>
<div class="t" style="top:836.15px;font-size:14px;line-height:14px;color:#1d5f80;letter-spacing:-0.531px;left:1031.75px;width:600px;text-align:right;">3,010.00</div>
<div class="t" style="top:836.15px;font-size:14px;line-height:14px;color:#1d5f80;letter-spacing:-0.531px;left:1211.75px;width:600px;text-align:right;">1,610.00</div>
<div class="t" style="top:855.98px;font-size:14.2px;line-height:14.2px;color:#000;letter-spacing:-0.136px;left:56.00px;">Vehicle and equipment leases (tractors, feed trucks, poultry transport vehicles, machinery)</div>
<div class="t" style="top:855.90px;font-size:14.3px;line-height:14.3px;color:#000;transform:scaleX(0.8809);transform-origin:right center;left:138.00px;width:600px;text-align:right;">USD</div>
<div class="t" style="top:856.15px;font-size:14px;line-height:14px;color:#1d5f80;letter-spacing:-0.531px;left:311.75px;width:600px;text-align:right;">640.00</div>
<div class="t" style="top:856.15px;font-size:14px;line-height:14px;color:#1d5f80;letter-spacing:-0.531px;left:491.75px;width:600px;text-align:right;">415.00</div>
<div class="t" style="top:856.15px;font-size:14px;line-height:14px;color:#1d5f80;letter-spacing:-0.531px;left:671.75px;width:600px;text-align:right;">725.00</div>
<div class="t" style="top:856.15px;font-size:14px;line-height:14px;color:#1d5f80;letter-spacing:-0.531px;left:851.75px;width:600px;text-align:right;">370.00</div>
<div class="t" style="top:856.15px;font-size:14px;line-height:14px;color:#1d5f80;letter-spacing:-0.531px;left:1031.75px;width:600px;text-align:right;">630.00</div>
<div class="t" style="top:856.15px;font-size:14px;line-height:14px;color:#1d5f80;letter-spacing:-0.531px;left:1211.75px;width:600px;text-align:right;">340.00</div>
<div class="t" style="top:875.98px;font-size:14.2px;line-height:14.2px;color:#000;letter-spacing:-0.086px;left:55.00px;">Maintenance and repair costs (farm equipment, housing structures, irrigation systems)</div>
<div class="t" style="top:875.90px;font-size:14.3px;line-height:14.3px;color:#000;transform:scaleX(0.8809);transform-origin:right center;left:138.00px;width:600px;text-align:right;">USD</div>
<div class="t" style="top:876.15px;font-size:14px;line-height:14px;color:#1d5f80;letter-spacing:-0.531px;left:311.75px;width:600px;text-align:right;">360.00</div>
<div class="t" style="top:876.15px;font-size:14px;line-height:14px;color:#1d5f80;letter-spacing:-0.531px;left:491.75px;width:600px;text-align:right;">445.00</div>
<div class="t" style="top:876.15px;font-size:14px;line-height:14px;color:#1d5f80;letter-spacing:-0.531px;left:671.75px;width:600px;text-align:right;">195.00</div>
<div class="t" style="top:876.15px;font-size:14px;line-height:14px;color:#1d5f80;letter-spacing:-0.531px;left:851.75px;width:600px;text-align:right;">320.00</div>
<div class="t" style="top:876.15px;font-size:14px;line-height:14px;color:#1d5f80;letter-spacing:-0.531px;left:1031.75px;width:600px;text-align:right;">370.00</div>
<div class="t" style="top:876.15px;font-size:14px;line-height:14px;color:#1d5f80;letter-spacing:-0.531px;left:1211.75px;width:600px;text-align:right;">200.00</div>
<div class="t" style="top:895.98px;font-size:14.2px;line-height:14.2px;color:#000;letter-spacing:-0.086px;left:55.00px;">Office and operational supplies (stationery, uniforms, safety gear)</div>
<div class="t" style="top:895.90px;font-size:14.3px;line-height:14.3px;color:#000;transform:scaleX(0.8809);transform-origin:right center;left:138.00px;width:600px;text-align:right;">USD</div>
<div class="t" style="top:896.15px;font-size:14px;line-height:14px;color:#1d5f80;letter-spacing:-0.531px;left:311.75px;width:600px;text-align:right;">285.00</div>
<div class="t" style="top:896.15px;font-size:14px;line-height:14px;color:#1d5f80;letter-spacing:-0.531px;left:491.75px;width:600px;text-align:right;">365.00</div>
<div class="t" style="top:896.15px;font-size:14px;line-height:14px;color:#1d5f80;letter-spacing:-0.531px;left:671.75px;width:600px;text-align:right;">295.00</div>
<div class="t" style="top:896.15px;font-size:14px;line-height:14px;color:#1d5f80;letter-spacing:-0.531px;left:851.75px;width:600px;text-align:right;">410.00</div>
<div class="t" style="top:896.15px;font-size:14px;line-height:14px;color:#1d5f80;letter-spacing:-0.531px;left:1031.75px;width:600px;text-align:right;">425.00</div>
<div class="t" style="top:896.15px;font-size:14px;line-height:14px;color:#1d5f80;letter-spacing:-0.531px;left:1211.75px;width:600px;text-align:right;">315.00</div>
<div style="left:0px;top:906px;width:1921px;height:60px;background:#e6e6e6"></div>
<div style="left:1894px;top:0px;width:27px;height:906px;background:#e8e8e8"></div>
<div style="left:1898px;top:571px;width:19px;height:317px;background:#f2f2f2"></div>
<div style="left:0px;top:0px;width:1921px;height:25px;background:#e6e6e6"></div>
<svg style="position:absolute;left:10px;top:10px" width="13" height="13"><polygon points="12.5,0.5 12.5,12.5 0.5,12.5" fill="#bcbcbc"/></svg>
<div style="left:25px;top:6px;width:28px;height:19px;background:#d2d2d2"></div>
<div style="left:52px;top:6px;width:1px;height:19px;background:#c0c0c0"></div>
<div class="t" style="top:8.98px;font-size:14.2px;line-height:14.2px;color:#1e6e3c;left:-261.00px;width:600px;text-align:center;transform:scaleX(0.9);">A</div>
<div style="left:709px;top:6px;width:1px;height:19px;background:#c0c0c0"></div>
<div class="t" style="top:8.98px;font-size:14.2px;line-height:14.2px;color:#000;left:81.00px;width:600px;text-align:center;transform:scaleX(0.9);">B</div>
<div style="left:739px;top:6px;width:1px;height:19px;background:#c0c0c0"></div>
<div class="t" style="top:8.98px;font-size:14.2px;line-height:14.2px;color:#000;left:424.50px;width:600px;text-align:center;transform:scaleX(0.9);">C</div>
<div style="left:919px;top:6px;width:1px;height:19px;background:#c0c0c0"></div>
<div class="t" style="top:8.98px;font-size:14.2px;line-height:14.2px;color:#000;left:529.50px;width:600px;text-align:center;transform:scaleX(0.9);">D</div>
<div style="left:1099px;top:6px;width:1px;height:19px;background:#c0c0c0"></div>
<div class="t" style="top:8.98px;font-size:14.2px;line-height:14.2px;color:#000;left:709.50px;width:600px;text-align:center;transform:scaleX(0.9);">E</div>
<div style="left:1279px;top:6px;width:1px;height:19px;background:#c0c0c0"></div>
<div class="t" style="top:8.98px;font-size:14.2px;line-height:14.2px;color:#000;left:889.50px;width:600px;text-align:center;transform:scaleX(0.9);">F</div>
<div style="left:1459px;top:6px;width:1px;height:19px;background:#c0c0c0"></div>
<div class="t" style="top:8.98px;font-size:14.2px;line-height:14.2px;color:#000;left:1069.50px;width:600px;text-align:center;transform:scaleX(0.9);">G</div>
<div style="left:1639px;top:6px;width:1px;height:19px;background:#c0c0c0"></div>
<div class="t" style="top:8.98px;font-size:14.2px;line-height:14.2px;color:#000;left:1249.50px;width:600px;text-align:center;transform:scaleX(0.9);">H</div>
<div style="left:1819px;top:6px;width:1px;height:19px;background:#c0c0c0"></div>
<div class="t" style="top:8.98px;font-size:14.2px;line-height:14.2px;color:#000;left:1429.50px;width:600px;text-align:center;transform:scaleX(0.9);">I</div>
<div style="left:25px;top:6px;width:1px;height:19px;background:#c0c0c0"></div>
<div style="left:0px;top:25px;width:1894px;height:1px;background:#a8a8a8"></div>
<div style="left:0px;top:26px;width:25px;height:880px;background:#e6e6e6"></div>
<div style="left:0px;top:26px;width:25px;height:19px;background:#d2d2d2"></div>
<div style="left:25px;top:26px;width:1px;height:880px;background:#a8a8a8"></div>
<div style="left:0px;top:45px;width:25px;height:1px;background:#c6c6c6"></div>
<div class="t" style="top:29.83px;font-size:13.2px;line-height:13.2px;color:#1e6e3c;left:-287.00px;width:600px;text-align:center;">1</div>
<div style="left:0px;top:102px;width:25px;height:1px;background:#c6c6c6"></div>
<div class="t" style="top:86.83px;font-size:13.2px;line-height:13.2px;color:#000;left:-287.00px;width:600px;text-align:center;">2</div>
<div style="left:0px;top:122px;width:25px;height:1px;background:#c6c6c6"></div>
<div class="t" style="top:106.83px;font-size:13.2px;line-height:13.2px;color:#000;left:-287.00px;width:600px;text-align:center;">3</div>
<div style="left:0px;top:142px;width:25px;height:1px;background:#c6c6c6"></div>
<div class="t" style="top:126.83px;font-size:13.2px;line-height:13.2px;color:#000;left:-287.00px;width:600px;text-align:center;">4</div>
<div style="left:0px;top:162px;width:25px;height:1px;background:#c6c6c6"></div>
<div class="t" style="top:146.83px;font-size:13.2px;line-height:13.2px;color:#000;left:-287.00px;width:600px;text-align:center;">5</div>
<div style="left:0px;top:182px;width:25px;height:1px;background:#c6c6c6"></div>
<div class="t" style="top:166.83px;font-size:13.2px;line-height:13.2px;color:#000;left:-287.00px;width:600px;text-align:center;">6</div>
<div style="left:0px;top:250px;width:25px;height:1px;background:#c6c6c6"></div>
<div class="t" style="top:234.83px;font-size:13.2px;line-height:13.2px;color:#000;left:-287.00px;width:600px;text-align:center;">7</div>
<div style="left:0px;top:270px;width:25px;height:1px;background:#c6c6c6"></div>
<div class="t" style="top:254.83px;font-size:13.2px;line-height:13.2px;color:#000;left:-287.00px;width:600px;text-align:center;">8</div>
<div style="left:0px;top:290px;width:25px;height:1px;background:#c6c6c6"></div>
<div class="t" style="top:274.83px;font-size:13.2px;line-height:13.2px;color:#000;left:-287.00px;width:600px;text-align:center;">9</div>
<div style="left:0px;top:310px;width:25px;height:1px;background:#c6c6c6"></div>
<div class="t" style="top:294.83px;font-size:13.2px;line-height:13.2px;color:#000;left:-287.00px;width:600px;text-align:center;">10</div>
<div style="left:0px;top:330px;width:25px;height:1px;background:#c6c6c6"></div>
<div class="t" style="top:314.83px;font-size:13.2px;line-height:13.2px;color:#000;left:-287.00px;width:600px;text-align:center;">11</div>
<div style="left:0px;top:350px;width:25px;height:1px;background:#c6c6c6"></div>
<div class="t" style="top:334.83px;font-size:13.2px;line-height:13.2px;color:#000;left:-287.00px;width:600px;text-align:center;">12</div>
<div style="left:0px;top:370px;width:25px;height:1px;background:#c6c6c6"></div>
<div class="t" style="top:354.83px;font-size:13.2px;line-height:13.2px;color:#000;left:-287.00px;width:600px;text-align:center;">13</div>
<div style="left:0px;top:390px;width:25px;height:1px;background:#c6c6c6"></div>
<div class="t" style="top:374.83px;font-size:13.2px;line-height:13.2px;color:#000;left:-287.00px;width:600px;text-align:center;">14</div>
<div style="left:0px;top:410px;width:25px;height:1px;background:#c6c6c6"></div>
<div class="t" style="top:394.83px;font-size:13.2px;line-height:13.2px;color:#000;left:-287.00px;width:600px;text-align:center;">15</div>
<div style="left:0px;top:430px;width:25px;height:1px;background:#c6c6c6"></div>
<div class="t" style="top:414.83px;font-size:13.2px;line-height:13.2px;color:#000;left:-287.00px;width:600px;text-align:center;">16</div>
<div style="left:0px;top:450px;width:25px;height:1px;background:#c6c6c6"></div>
<div class="t" style="top:434.83px;font-size:13.2px;line-height:13.2px;color:#000;left:-287.00px;width:600px;text-align:center;">17</div>
<div style="left:0px;top:470px;width:25px;height:1px;background:#c6c6c6"></div>
<div class="t" style="top:454.83px;font-size:13.2px;line-height:13.2px;color:#000;left:-287.00px;width:600px;text-align:center;">18</div>
<div style="left:0px;top:490px;width:25px;height:1px;background:#c6c6c6"></div>
<div class="t" style="top:474.83px;font-size:13.2px;line-height:13.2px;color:#000;left:-287.00px;width:600px;text-align:center;">19</div>
<div style="left:0px;top:511px;width:25px;height:1px;background:#c6c6c6"></div>
<div class="t" style="top:495.83px;font-size:13.2px;line-height:13.2px;color:#000;left:-287.00px;width:600px;text-align:center;">20</div>
<div style="left:0px;top:532px;width:25px;height:1px;background:#c6c6c6"></div>
<div class="t" style="top:516.83px;font-size:13.2px;line-height:13.2px;color:#000;left:-287.00px;width:600px;text-align:center;">21</div>
<div style="left:0px;top:552px;width:25px;height:1px;background:#c6c6c6"></div>
<div class="t" style="top:536.83px;font-size:13.2px;line-height:13.2px;color:#000;left:-287.00px;width:600px;text-align:center;">22</div>
<div style="left:0px;top:572px;width:25px;height:1px;background:#c6c6c6"></div>
<div class="t" style="top:556.83px;font-size:13.2px;line-height:13.2px;color:#000;left:-287.00px;width:600px;text-align:center;">23</div>
<div style="left:0px;top:592px;width:25px;height:1px;background:#c6c6c6"></div>
<div class="t" style="top:576.83px;font-size:13.2px;line-height:13.2px;color:#000;left:-287.00px;width:600px;text-align:center;">24</div>
<div style="left:0px;top:612px;width:25px;height:1px;background:#c6c6c6"></div>
<div class="t" style="top:596.83px;font-size:13.2px;line-height:13.2px;color:#000;left:-287.00px;width:600px;text-align:center;">25</div>
<div style="left:0px;top:632px;width:25px;height:1px;background:#c6c6c6"></div>
<div class="t" style="top:616.83px;font-size:13.2px;line-height:13.2px;color:#000;left:-287.00px;width:600px;text-align:center;">26</div>
<div style="left:0px;top:652px;width:25px;height:1px;background:#c6c6c6"></div>
<div class="t" style="top:636.83px;font-size:13.2px;line-height:13.2px;color:#000;left:-287.00px;width:600px;text-align:center;">27</div>
<div style="left:0px;top:672px;width:25px;height:1px;background:#c6c6c6"></div>
<div class="t" style="top:656.83px;font-size:13.2px;line-height:13.2px;color:#000;left:-287.00px;width:600px;text-align:center;">28</div>
<div style="left:0px;top:692px;width:25px;height:1px;background:#c6c6c6"></div>
<div class="t" style="top:676.83px;font-size:13.2px;line-height:13.2px;color:#000;left:-287.00px;width:600px;text-align:center;">29</div>
<div style="left:0px;top:712px;width:25px;height:1px;background:#c6c6c6"></div>
<div class="t" style="top:696.83px;font-size:13.2px;line-height:13.2px;color:#000;left:-287.00px;width:600px;text-align:center;">30</div>
<div style="left:0px;top:732px;width:25px;height:1px;background:#c6c6c6"></div>
<div class="t" style="top:716.83px;font-size:13.2px;line-height:13.2px;color:#000;left:-287.00px;width:600px;text-align:center;">31</div>
<div style="left:0px;top:752px;width:25px;height:1px;background:#c6c6c6"></div>
<div class="t" style="top:736.83px;font-size:13.2px;line-height:13.2px;color:#000;left:-287.00px;width:600px;text-align:center;">32</div>
<div style="left:0px;top:772px;width:25px;height:1px;background:#c6c6c6"></div>
<div class="t" style="top:756.83px;font-size:13.2px;line-height:13.2px;color:#000;left:-287.00px;width:600px;text-align:center;">33</div>
<div style="left:0px;top:792px;width:25px;height:1px;background:#c6c6c6"></div>
<div class="t" style="top:776.83px;font-size:13.2px;line-height:13.2px;color:#000;left:-287.00px;width:600px;text-align:center;">34</div>
<div style="left:0px;top:812px;width:25px;height:1px;background:#c6c6c6"></div>
<div class="t" style="top:796.83px;font-size:13.2px;line-height:13.2px;color:#000;left:-287.00px;width:600px;text-align:center;">35</div>
<div style="left:0px;top:832px;width:25px;height:1px;background:#c6c6c6"></div>
<div class="t" style="top:816.83px;font-size:13.2px;line-height:13.2px;color:#000;left:-287.00px;width:600px;text-align:center;">36</div>
<div style="left:0px;top:852px;width:25px;height:1px;background:#c6c6c6"></div>
<div class="t" style="top:836.83px;font-size:13.2px;line-height:13.2px;color:#000;left:-287.00px;width:600px;text-align:center;">37</div>
<div style="left:0px;top:872px;width:25px;height:1px;background:#c6c6c6"></div>
<div class="t" style="top:856.83px;font-size:13.2px;line-height:13.2px;color:#000;left:-287.00px;width:600px;text-align:center;">38</div>
<div style="left:0px;top:892px;width:25px;height:1px;background:#c6c6c6"></div>
<div class="t" style="top:876.83px;font-size:13.2px;line-height:13.2px;color:#000;left:-287.00px;width:600px;text-align:center;">39</div>
<div class="t" style="top:896.83px;font-size:13.2px;line-height:13.2px;color:#000;left:-287.00px;width:600px;text-align:center;">40</div>
<div style="left:0px;top:906px;width:1921px;height:60px;background:#e6e6e6"></div>
<div style="left:24px;top:24px;width:30px;height:23px;border:2px solid #1e6e3c;box-sizing:border-box"></div>
<div style="left:50px;top:43px;width:6px;height:6px;background:#1e6e3c;border:1px solid #fff;box-sizing:content-box;left:49px;top:42px"></div>
<div style="left:1894px;top:26px;width:1px;height:880px;background:#a8a8a8"></div>
<div style="left:1898px;top:8px;width:19px;height:19px;background:#fff;border:1px solid #999;box-sizing:border-box"></div>
<svg style="position:absolute;left:1902px;top:13px" width="12" height="8"><polygon points="6,1 10.5,5.5 1.5,5.5" fill="#111"/></svg>
<div style="left:1898px;top:26px;width:19px;height:545px;background:#fff;border:1px solid #999;border-top-width:2px;box-sizing:border-box"></div>
<div style="left:1898px;top:888px;width:19px;height:19px;background:#fff;border:1px solid #999;box-sizing:border-box"></div>
<svg style="position:absolute;left:1902px;top:895px" width="12" height="8"><polygon points="1.5,1 10.5,1 6,5.5" fill="#111"/></svg>
<div style="left:0px;top:906px;width:1894px;height:1px;background:#a8a8a8"></div>
<svg style="position:absolute;left:28px;top:916px" width="10" height="12"><polygon points="8,1 8,11 2.5,6" fill="#c4c4c4"/></svg>
<svg style="position:absolute;left:59px;top:916px" width="10" height="12"><polygon points="2,1 2,11 7.5,6" fill="#c4c4c4"/></svg>
<div style="left:112px;top:910px;width:1px;height:24px;background:#b0b0b0"></div>
<div style="left:232px;top:910px;width:1px;height:24px;background:#b0b0b0"></div>
<div style="left:340px;top:910px;width:1px;height:24px;background:#b0b0b0"></div>
<div style="left:766px;top:910px;width:1px;height:24px;background:#b0b0b0"></div>
<div style="left:115px;top:909px;width:115px;height:26px;background:#265f9a"></div>
<div class="t" style="top:913.16px;font-size:16px;line-height:16px;color:#fff;letter-spacing:0.350px;left:126.00px;">Cover Sheet</div>
<div class="t" style="top:913.16px;font-size:16px;line-height:16px;color:#3c3c3c;letter-spacing:0.422px;left:246.20px;">Disclaimer</div>
<div style="left:343px;top:909px;width:94px;height:26px;background:#c0501c"></div>
<div class="t" style="top:913.16px;font-size:16px;line-height:16px;color:#fff;letter-spacing:0.357px;left:354.50px;">Overview</div>
<div style="left:438px;top:906px;width:177px;height:29px;background:linear-gradient(180deg,#ffffff 0%,#eaf5fa 40%,#c6e2f0 100%);border-left:1px solid #a8a8a8;border-right:1px solid #a8a8a8;box-sizing:border-box"></div>
<div style="left:439px;top:933px;width:176px;height:2px;background:#1e6e3c"></div>
<div class="t" style="top:912.82px;font-size:16.4px;line-height:16.4px;color:#1d6b40;font-weight:bold;letter-spacing:-0.224px;left:450.80px;">Cash Flow Forecast</div>
<div style="left:617px;top:909px;width:147px;height:26px;background:#92d050"></div>
<div class="t" style="top:913.16px;font-size:16px;line-height:16px;color:#111;letter-spacing:0.286px;left:628.40px;">Cash Flow Chart</div>
<svg style="position:absolute;left:803px;top:911px" width="24" height="24"><circle cx="12" cy="12" r="9.3" fill="none" stroke="#707070" stroke-width="1.2"/><path d="M12 7.3v9.4M7.3 12h9.4" stroke="#505050" stroke-width="1.3"/></svg>
<div style="left:1600px;top:917px;width:4px;height:3px;background:#c0c0c0"></div>
<div style="left:1600px;top:922px;width:4px;height:3px;background:#c0c0c0"></div>
<div style="left:1600px;top:927px;width:4px;height:3px;background:#c0c0c0"></div>
<div style="left:1621px;top:913px;width:273px;height:19px;background:#f0f0f0"></div>
<div style="left:1621px;top:913px;width:19px;height:19px;background:#fff;border:1px solid #a0a0a0;box-sizing:border-box"></div>
<svg style="position:absolute;left:1626px;top:917px" width="10" height="12"><polygon points="7.5,1.5 7.5,10.5 2.5,6" fill="#111"/></svg>
<div style="left:1639px;top:913px;width:140px;height:19px;background:#fff;border:1px solid #a0a0a0;box-sizing:border-box"></div>
<div style="left:1876px;top:913px;width:19px;height:19px;background:#fff;border:1px solid #a0a0a0;box-sizing:border-box"></div>
<svg style="position:absolute;left:1881px;top:917px" width="10" height="12"><polygon points="2.5,1.5 2.5,10.5 7.5,6" fill="#111"/></svg>
<div style="left:0px;top:938px;width:1921px;height:28px;background:#f3f3f3"></div>
<div style="left:0px;top:938px;width:1921px;height:1px;background:#d4d4d4"></div>
<div class="t" style="top:947.02px;font-size:12.5px;line-height:12.5px;color:#333;letter-spacing:-0.125px;left:14.00px;">Ready</div>
<div class="t" style="top:947.02px;font-size:12.5px;line-height:12.5px;color:#333;letter-spacing:-0.000px;left:71.20px;">Calculate</div>
<svg style="position:absolute;left:145px;top:940px" width="70" height="26"><rect x="6.5" y="8.6" width="12.9" height="9.8" fill="none" stroke="#555" stroke-width="1.1"/><rect x="12.6" y="5.1" width="7.3" height="3.6" fill="#555"/><circle cx="8.4" cy="7.3" r="4.5" fill="#f3f3f3"/><circle cx="8.4" cy="7.3" r="3.6" fill="#555"/><path d="M12 10.6h1.8M15.1 10.6h1.8M9.1 13.5h1.8M12 13.5h1.8M15.1 13.5h1.8M9.1 16.5h1.8M12 16.5h1.8M15.1 16.5h1.8" stroke="#555" stroke-width="1"/><path d="M49.6 6.1A6.8 6.8 0 0 0 51.7 19.2" fill="none" stroke="#555" stroke-width="1.2" stroke-dasharray="2.6 1.1"/><path d="M51.4 4.2v8.2M49.1 10.4l2.3 2.3 2.3-2.3M54.8 10.6h5M57.6 8.3l2.3 2.3-2.3 2.3" stroke="#555" stroke-width="1.2" fill="none"/><path d="M53.6 13.6l9 7.9M62.3 14l-8.7 7.5" stroke="#444" stroke-width="1.9"/></svg>
<div class="t" style="top:946.85px;font-size:12.7px;line-height:12.7px;color:#222;font-weight:bold;left:212.00px;">Accessibility: Investigate</div>
<svg style="position:absolute;left:1409px;top:943px" width="22" height="21"><rect x="0" y="0" width="19" height="12.5" rx="1.5" fill="#444"/><rect x="4" y="16" width="4.5" height="1.6" fill="#444"/><circle cx="13.6" cy="13.8" r="6.8" fill="#f3f3f3"/><circle cx="13.6" cy="13.8" r="4.9" fill="none" stroke="#444" stroke-width="2.2" stroke-dasharray="2.2 1.65"/><circle cx="13.6" cy="13.8" r="4" fill="#444"/><circle cx="13.6" cy="13.8" r="1.6" fill="#f3f3f3"/></svg>
<div class="t" style="top:946.85px;font-size:12.7px;line-height:12.7px;color:#222;letter-spacing:0.073px;left:1430.00px;">Display Settings</div>
<div style="left:1547px;top:938px;width:50px;height:28px;background:#c8c8c8"></div>
<svg style="position:absolute;left:1563px;top:943px" width="18" height="18"><rect x="1.5" y="1.5" width="15" height="15" fill="none" stroke="#777" stroke-width="1"/><path d="M6.5 1.5v15M11.5 1.5v15M1.5 6.5h15M1.5 11.5h15" stroke="#777" stroke-width="1"/></svg>
<svg style="position:absolute;left:1612px;top:943px" width="20" height="18"><rect x="1.5" y="1.5" width="16" height="14" fill="none" stroke="#666" stroke-width="1"/><rect x="4.5" y="4.5" width="10" height="8" fill="none" stroke="#666" stroke-width="1"/><path d="M6.5 6.5h6M6.5 8.5h6M6.5 10.5h6" stroke="#666" stroke-width="0.9"/></svg>
<svg style="position:absolute;left:1662px;top:943px" width="20" height="18"><rect x="1.5" y="1.5" width="16" height="15" fill="none" stroke="#666" stroke-width="1"/><path d="M1.5 10.5h8V1.5M5.5 1.5v9" stroke="#666" stroke-width="1" fill="none"/></svg>
<div style="left:1704px;top:951px;width:9px;height:1px;background:#444"></div>
<div style="left:1720px;top:951px;width:125px;height:1px;background:#444"></div>
<div style="left:1767px;top:945px;width:6px;height:14px;background:#444"></div>
<div style="left:1782px;top:947px;width:1px;height:9px;background:#444"></div>
<div style="left:1851px;top:951px;width:10px;height:1px;background:#444"></div>
<div style="left:1855px;top:946px;width:1px;height:11px;background:#444"></div>
<div class="t" style="top:946.85px;font-size:12.7px;line-height:12.7px;color:#333;left:1876.00px;">80%</div>
<div style="left:0px;top:965px;width:1921px;height:1px;background:#858585"></div>
<div style="left:0px;top:965px;width:39px;height:1px;background:#b4b4b4"></div>
<div style="left:1920px;top:0px;width:1px;height:966px;background:#111"></div>
</body></html>
